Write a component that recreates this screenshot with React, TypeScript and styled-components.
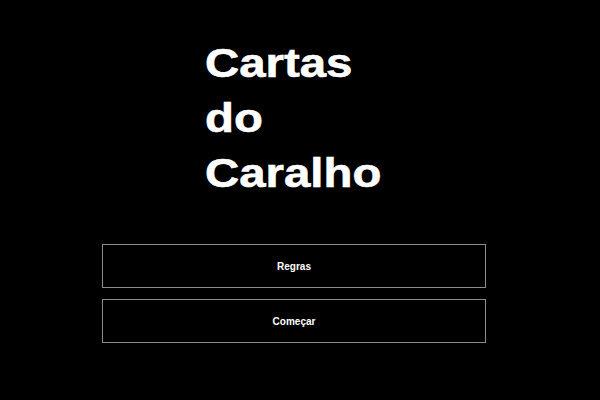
import React from "react";
import styled, { createGlobalStyle } from "styled-components";

const Global = createGlobalStyle`
  html, body { margin: 0; padding: 0; background: #000; }
  body { font-family: "Liberation Sans", Arial, sans-serif; color: #fff; }
`;

const Page = styled.main`
  width: 600px;
  height: 400px;
  background: #000;
  display: flex;
  flex-direction: column;
  padding-top: 36px;
  box-sizing: border-box;
`;

const Title = styled.h1`
  margin: 0 0 43px 205px;
  width: 165px;
  font-family: "Liberation Sans", Arial, sans-serif;
  font-weight: 700;
  font-size: 41px;
  line-height: 55px;
  color: #fff;
  -webkit-text-stroke: 0.6px #fff;
  transform: scaleX(1.155);
  transform-origin: left center;
`;

const Menu = styled.nav`
  display: flex;
  flex-direction: column;
  gap: 11px;
  margin-left: 102px;
  width: 384px;
`;

const MenuButton = styled.button`
  height: 44px;
  box-sizing: border-box;
  background: #000;
  border: 1px solid #8c8c8c;
  color: #fff;
  font-family: "Liberation Sans", Arial, sans-serif;
  font-weight: 700;
  font-size: 10px;
  padding: 0;
  cursor: pointer;
`;

export default function App() {
  return (
    <>
      <Global />
      <Page>
        <Title>Cartas do Caralho</Title>
        <Menu>
          <MenuButton>Regras</MenuButton>
          <MenuButton>Começar</MenuButton>
        </Menu>
      </Page>
    </>
  );
}
